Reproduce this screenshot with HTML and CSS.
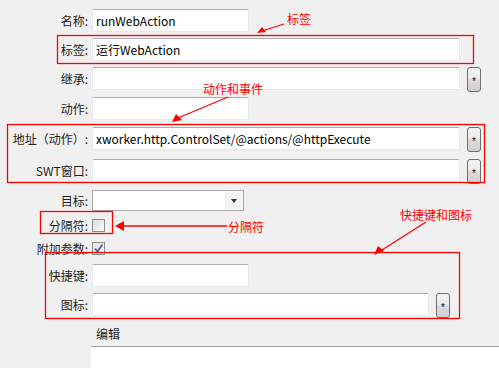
FILE: index.html
```html
<!DOCTYPE html>
<html lang="zh-CN">
<head>
    <meta charset="UTF-8">
    <title>WebAction 属性</title>
    <link rel="stylesheet" href="styles.css">
</head>
<body>
    <div class="page">
        <form class="attr-form">
            <div class="row">
                <label class="label">名称:</label>
                <input class="text-field short" type="text" value="runWebAction">
            </div>
            <div class="row">
                <label class="label">标签:</label>
                <input class="text-field wide" type="text" value="运行WebAction">
            </div>
            <div class="row">
                <label class="label">继承:</label>
                <input class="text-field wide" type="text">
                <button type="button" class="pick-button">*</button>
            </div>
            <div class="row gap-1">
                <label class="label">动作:</label>
                <input class="text-field short" type="text">
            </div>
            <div class="row gap-1">
                <label class="label">地址（动作）:</label>
                <input class="text-field wide" type="text" value="xworker.http.ControlSet/@actions/@httpExecute">
                <button type="button" class="pick-button">*</button>
            </div>
            <div class="row gap-3">
                <label class="label">SWT窗口:</label>
                <input class="text-field wide" type="text">
                <button type="button" class="pick-button">*</button>
            </div>
            <div class="row gap-1">
                <label class="label">目标:</label>
                <div class="combo">
                    <span class="combo-value"></span>
                    <span class="combo-arrow"></span>
                </div>
            </div>
            <div class="row check-row first-check">
                <label class="label">分隔符:</label>
                <span class="check-box"></span>
            </div>
            <div class="row check-row">
                <label class="label">附加参数:</label>
                <span class="check-box checked">
                    <svg width="11" height="11" viewBox="0 0 11 11"><path d="M2 5.5 L4.5 8.5 L9.5 1.5" fill="none" stroke="#4a5fa8" stroke-width="1.8"/></svg>
                </span>
            </div>
            <div class="row after-check">
                <label class="label">快捷键:</label>
                <input class="text-field short" type="text">
            </div>
            <div class="row">
                <label class="label">图标:</label>
                <input class="text-field icon-field" type="text">
                <button type="button" class="pick-button">*</button>
            </div>
        </form>

        <div class="edit-section">
            <div class="edit-title">编辑</div>
            <div class="edit-area"></div>
        </div>

        <svg class="notes" width="499" height="368" viewBox="0 0 499 368">
            <g fill="none" stroke="#ff0000" stroke-width="1.3">
                <rect x="57.5" y="35.5" width="416" height="28"/>
                <rect x="7.5" y="124.5" width="477" height="58"/>
                <rect x="40.5" y="211.5" width="72" height="22"/>
                <rect x="45.5" y="252.5" width="414" height="66"/>
                <line x1="284" y1="24" x2="262" y2="31"/>
                <line x1="228" y1="97" x2="178" y2="118"/>
                <line x1="227" y1="226" x2="122" y2="226"/>
                <line x1="426" y1="222" x2="382" y2="250"/>
            </g>
            <g fill="#ff0000">
                <polygon points="257,33 262,27 266,32"/>
                <polygon points="172,122 176,114 182,120"/>
                <polygon points="115,226 124,221 124,231"/>
                <polygon points="374,255 378,246 384,251"/>
            </g>
            <g class="note-text" fill="#ff0000">
                <text x="287" y="24">标签</text>
                <text x="203" y="94">动作和事件</text>
                <text x="228" y="232">分隔符</text>
                <text x="400" y="220">快捷键和图标</text>
            </g>
        </svg>
    </div>
</body>
</html>
```

FILE: styles.css
```css
body {
    margin: 0;
    padding: 0;
    background: #f0f0f0;
    font-family: "Noto Sans CJK SC", "Noto Sans", sans-serif;
    font-size: 12px;
    color: #1e1e1e;
}
.page {
    position: relative;
    width: 499px;
    height: 368px;
    overflow: hidden;
}
.attr-form {
    display: flex;
    flex-direction: column;
    padding-top: 9px;
}
.row {
    display: flex;
    align-items: center;
    height: 22px;
    margin-bottom: 7px;
}
.gap-1 {
    margin-top: 1px;
}
.gap-3 {
    margin-top: 3px;
}
.label {
    width: 92px;
    padding-right: 4px;
    box-sizing: border-box;
    text-align: right;
    white-space: nowrap;
    flex-shrink: 0;
}
.text-field {
    height: 23px;
    box-sizing: border-box;
    margin: 0;
    padding: 0 3px;
    border: 1px solid #e3e9ef;
    border-top-color: #abadb3;
    border-radius: 2px;
    background: #fff;
    font-family: "Noto Sans CJK SC", "Noto Sans", sans-serif;
    font-size: 12px;
    color: #000;
}
.short {
    width: 157px;
}
.wide {
    width: 368px;
}
.icon-field {
    width: 337px;
}
.pick-button {
    width: 14px;
    height: 25px;
    margin: 0 0 0 7px;
    padding: 4px 0 0;
    box-sizing: border-box;
    border: 1px solid #707070;
    border-radius: 3px;
    background: linear-gradient(#f2f2f2 0%, #ebebeb 45%, #dddddd 50%, #cfcfcf 100%);
    font-family: "Liberation Sans", sans-serif;
    font-size: 10px;
    line-height: 10px;
    vertical-align: top;
    align-self: flex-start;
    color: #111;
}
.combo {
    display: flex;
    width: 152px;
    height: 21px;
    box-sizing: border-box;
    border: 1px solid #acacac;
    background: #fff;
}
.combo-value {
    flex: 1;
}
.combo-arrow {
    width: 17px;
    border-left: 1px solid #ececec;
    background: #f4f4f4;
    position: relative;
}
.combo-arrow::after {
    content: "";
    position: absolute;
    left: 5px;
    top: 8px;
    border-left: 3.5px solid transparent;
    border-right: 3.5px solid transparent;
    border-top: 4px solid #333;
}
.check-row {
    height: 16px;
    margin-bottom: 7px;
}
.first-check {
    margin-top: -1px;
}
.after-check {
    margin-top: 1px;
}
.check-box {
    display: flex;
    align-items: center;
    justify-content: center;
    width: 13px;
    height: 13px;
    box-sizing: border-box;
    border: 1px solid #8e8f8f;
    background: linear-gradient(135deg, #dcdcdc, #f8f8f8);
}
.check-box.checked {
    background: linear-gradient(135deg, #e0e0e0, #fafafa);
}
.edit-section {
    margin-top: 3px;
    padding-left: 91px;
}
.edit-title {
    padding-left: 5px;
    height: 17px;
    line-height: 17px;
}
.edit-area {
    margin-top: 4px;
    height: 30px;
    border-top: 1px solid #a0a0a0;
    background: #fff;
}
.notes {
    position: absolute;
    left: 0;
    top: 0;
    pointer-events: none;
}
.note-text {
    font-family: "Noto Sans CJK SC", sans-serif;
    font-size: 12px;
}
```
